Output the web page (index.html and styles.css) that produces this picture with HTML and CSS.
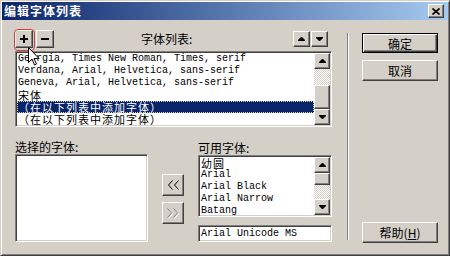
FILE: index.html
```html
<!DOCTYPE html>
<html lang="zh-CN">
<head>
  <meta charset="UTF-8">
  <title>编辑字体列表</title>
  <link rel="stylesheet" href="styles.css">
</head>
<body>

  <div class="window">
    <div class="titlebar">
      <span class="title">编辑字体列表</span>
      <button class="btn close">
        <svg width="8" height="7" viewBox="0 0 8 7"><path d="M0.5 0.5 L7.5 6.5 M7.5 0.5 L0.5 6.5" stroke="#000" stroke-width="1.6"/></svg>
      </button>
    </div>

    <div class="body">
      <div class="left">
        <div class="toolbar">
          <button class="btn tool">
            <svg width="8" height="8" viewBox="0 0 8 8"><path d="M0 3h8v2H0zM3 0h2v8H3z" fill="#000"/></svg>
          </button>
          <button class="btn tool minus">
            <svg width="8" height="2" viewBox="0 0 8 2"><path d="M0 0h8v2H0z" fill="#000"/></svg>
          </button>
          <span class="list-label">字体列表:</span>
          <div class="arrows">
            <button class="btn arrow"><svg width="7" height="4" viewBox="0 0 7 4"><path d="M3 0h1l3 3v1H0V3z" fill="#000"/></svg></button>
            <button class="btn arrow"><svg width="7" height="4" viewBox="0 0 7 4"><path d="M0 0h7v1L4 4H3L0 1z" fill="#000"/></svg></button>
          </div>
        </div>

        <div class="listbox fonts">
          <ul class="items">
            <li>Georgia, Times New Roman, Times, serif</li>
            <li>Verdana, Arial, Helvetica, sans-serif</li>
            <li>Geneva, Arial, Helvetica, sans-serif</li>
            <li class="cjk">宋体</li>
            <li class="cjk selected">（在以下列表中添加字体）</li>
            <li class="cjk">（在以下列表中添加字体）</li>
          </ul>
          <div class="scrollbar">
            <div class="btn sb-btn"><svg width="7" height="4" viewBox="0 0 7 4"><path d="M3 0h1l3 3v1H0V3z" fill="#000"/></svg></div>
            <div class="track big"></div>
            <div class="btn thumb big-thumb"></div>
            <div class="btn sb-btn"><svg width="7" height="4" viewBox="0 0 7 4"><path d="M0 0h7v1L4 4H3L0 1z" fill="#000"/></svg></div>
          </div>
        </div>

        <div class="lower">
          <div class="col-selected">
            <div class="label">选择的字体:</div>
            <div class="listbox chosen"></div>
          </div>

          <div class="movers">
            <button class="btn mover">
              <svg width="11" height="10" viewBox="0 0 11 10"><path d="M4.5 0.5 L0.5 5 L4.5 9.5 M10.5 0.5 L6.5 5 L10.5 9.5" fill="none" stroke="#000"/></svg>
            </button>
            <button class="btn mover">
              <svg width="12" height="11" viewBox="0 0 12 11"><path d="M1.5 1.5 L5.5 6 L1.5 10.5 M7.5 1.5 L11.5 6 L7.5 10.5" fill="none" stroke="#fff"/><path d="M0.5 0.5 L4.5 5 L0.5 9.5 M6.5 0.5 L10.5 5 L6.5 9.5" fill="none" stroke="#808080"/></svg>
            </button>
          </div>

          <div class="col-available">
            <div class="label">可用字体:</div>
            <div class="listbox available">
              <ul class="items">
                <li class="cjk">幼圆</li>
                <li>Arial</li>
                <li>Arial Black</li>
                <li>Arial Narrow</li>
                <li>Batang</li>
              </ul>
              <div class="scrollbar">
                <div class="btn sb-btn"><svg width="7" height="4" viewBox="0 0 7 4"><path d="M3 0h1l3 3v1H0V3z" fill="#000"/></svg></div>
                <div class="btn thumb small-thumb"></div>
                <div class="track small"></div>
                <div class="btn sb-btn"><svg width="7" height="4" viewBox="0 0 7 4"><path d="M0 0h7v1L4 4H3L0 1z" fill="#000"/></svg></div>
              </div>
            </div>
            <div class="listbox field">Arial Unicode MS</div>
          </div>
        </div>
      </div>

      <div class="separator"></div>

      <div class="actions">
        <button class="btn action default">确定</button>
        <button class="btn action cancel">取消</button>
        <button class="btn action help">帮助(<u>H</u>)</button>
      </div>
    </div>

    <!-- click highlight and mouse pointer over the add button -->
    <div class="ring"></div>
    <svg class="cursor" width="12" height="19" viewBox="0 0 12 19">
      <path d="M0.5 0.5 V15.5 L4 12 L6.5 18 L8.5 17 L6 11.5 H11 Z" fill="#fff" stroke="#000" stroke-linejoin="miter"/>
    </svg>
  </div>

</body>
</html>
```

FILE: styles.css
```css
* { box-sizing: border-box; }
body { margin: 0; background: #d4d0c8; font-family: "Noto Sans CJK SC", sans-serif; font-size: 12px; color: #000; }

.window { position: relative; width: 450px; height: 256px; background: #d4d0c8; border: 1px solid; border-color: #d4d0c8 #404040 #404040 #d4d0c8; box-shadow: inset 1px 1px #fff, inset -1px -1px #808080; padding: 1px; }

.titlebar { height: 18px; display: flex; align-items: center; padding: 0 4px 0 2px; background: linear-gradient(to right, #0a246a, #a6caf0); }
.title { flex: 1; color: #fff; font-weight: bold; font-size: 12px; letter-spacing: 1px; line-height: 18px; }

.btn { display: flex; align-items: center; justify-content: center; padding: 0; margin: 0; font: inherit; color: #000; background: #d4d0c8; border: 1px solid; border-color: #fff #404040 #404040 #fff; box-shadow: inset -1px -1px #808080; }
.close { width: 16px; height: 14px; }

.body { display: flex; padding: 10px 0 0 13px; }
.left { width: 317px; }

.toolbar { display: flex; align-items: center; height: 18px; }
.tool { width: 18px; height: 18px; }
.minus { margin-left: 3px; }
.list-label { margin-left: 87px; line-height: 14px; }
.arrows { display: flex; gap: 1px; margin-left: auto; margin-right: 4px; }
.arrow { width: 17px; height: 16px; }

.listbox { background: #fff; border: 1px solid; border-color: #808080 #fff #fff #808080; box-shadow: inset 1px 1px #404040, inset -1px -1px #d4d0c8; padding: 1px; overflow: hidden; }

.items { flex: 1; list-style: none; margin: 0; padding: 0; overflow: hidden; }
.items li { height: 12px; line-height: 12px; padding-left: 1px; font-family: "Liberation Mono", monospace; font-size: 10px; white-space: nowrap; }
.items li.cjk { font-family: "Noto Sans CJK SC", sans-serif; font-size: 11px; letter-spacing: 1px; }
.items li.selected { background: #0a246a; color: #fff; outline: 1px dotted #d8d8b0; outline-offset: -1px; }

.fonts { display: flex; margin-top: 3px; height: 76px; }
.scrollbar { width: 16px; display: flex; flex-direction: column; }
.sb-btn { width: 16px; height: 16px; flex: none; }
.track { background-color: #fff; background-image: conic-gradient(#d4d0c8 25%, #fff 0 50%, #d4d0c8 0 75%, #fff 0); background-size: 2px 2px; }
.track.big { height: 16px; }
.big-thumb { height: 24px; }
.track.small { height: 14px; }
.small-thumb { height: 12px; }

.lower { display: flex; margin-top: 13px; }
.label { line-height: 14px; }
.col-selected { width: 133px; }
.chosen { height: 88px; }

.movers { width: 22px; margin-left: 14px; padding-top: 34px; display: flex; flex-direction: column; gap: 6px; }
.mover { width: 22px; height: 22px; }

.col-available { width: 134px; margin-left: 14px; padding-top: 1px; }
.available { display: flex; height: 62px; }
.field { margin-top: 8px; height: 17px; padding: 1px 2px; font-family: "Liberation Mono", monospace; font-size: 10px; line-height: 13px; white-space: nowrap; }

.separator { width: 2px; height: 207px; margin: 3px 0 0 15px; border-left: 1px solid #808080; border-right: 1px solid #fff; }

.actions { width: 76px; margin-left: 13px; display: flex; flex-direction: column; }
.action { height: 21px; font-size: 12px; }
.default { margin-top: 3px; height: 20px; border-color: #000; box-shadow: inset 1px 1px #fff, inset -1px -1px #404040, inset -2px -2px #808080; }
.cancel { margin-top: 7px; }
.help { margin-top: 141px; }

.ring { position: absolute; left: 13px; top: 28px; width: 21px; height: 22px; border: 1px solid #d83a3a; border-radius: 4px; }
.cursor { position: absolute; left: 27px; top: 46px; }
```
